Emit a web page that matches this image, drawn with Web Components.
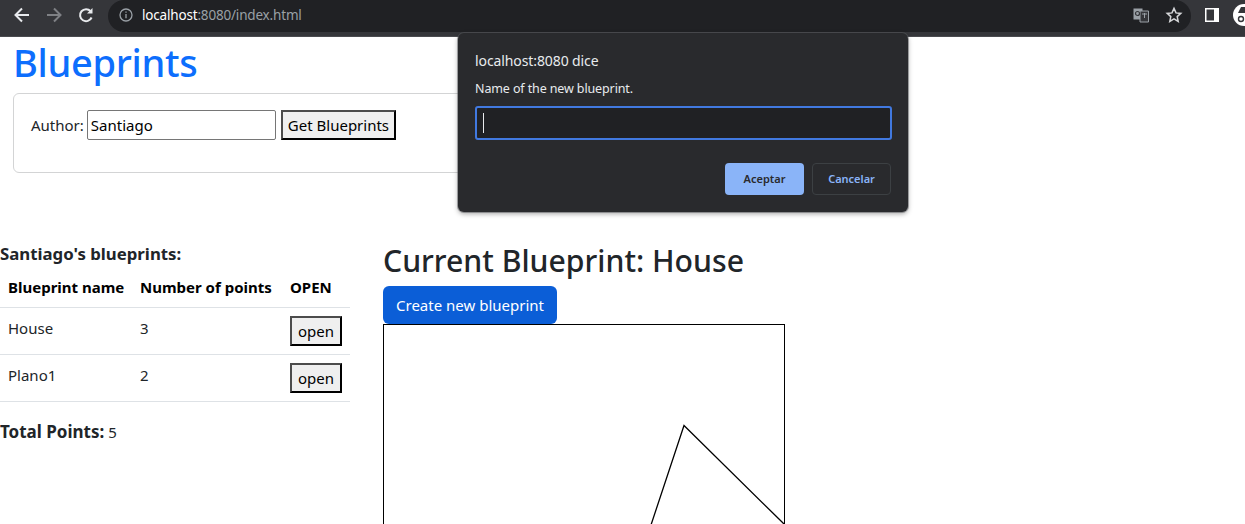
<!DOCTYPE html>
<html>
<head>
<meta charset="utf-8">
<title>Blueprints</title>
<style>
html, body { margin: 0; height: 100%; overflow: hidden; background: #fff; }
body { font-family: "Noto Sans", "Open Sans", sans-serif; position: relative; }
</style>
</head>
<body>
<browser-bar url-host="localhost" url-rest=":8080/index.html"></browser-bar>
<blueprints-app></blueprints-app>
<prompt-dialog title="localhost:8080 dice" message="Name of the new blueprint."></prompt-dialog>

<script>
window.customElements.define(
	'browser-bar',
	class extends HTMLElement {
		constructor() {
			super();
			const root = this.attachShadow({ mode: 'open' });
			root.innerHTML = `
				<style>
					:host { display: flex; align-items: center; height: 36px; background: #35363a; border-bottom: 1px solid #4a4b4f; box-sizing: content-box; font-family: "Noto Sans", sans-serif; }
					.nav { display: flex; align-items: center; gap: 12px; padding-left: 12px; margin-top: -6px; width: 96px; box-sizing: border-box; flex: none; }
					.omnibox { flex: 1; display: flex; align-items: center; height: 32px; margin-top: -4px; background: #202124; border-radius: 16px; padding: 0 8px 2px 10px; box-sizing: border-box; margin-left: 12px; }
					.url { font-size: 13.5px; letter-spacing: -0.18px; color: #9aa0a6; margin-left: 8px; flex: 1; white-space: nowrap; }
					.url b { font-weight: 400; color: #fff; }
					.right { display: flex; align-items: center; margin-top: -6px; width: 54px; flex: none; overflow: hidden; }
					svg { display: block; flex: none; }
				</style>
				<div class="nav">
					<svg width="20" height="20" viewBox="0 0 20 20" fill="none" stroke="#e8eaed" stroke-width="2"><path d="M17 10H4M10 3.500L3.500 10l6.500 6.500"/></svg>
					<svg width="20" height="20" viewBox="0 0 20 20" fill="none" stroke="#7f8185" stroke-width="2"><path d="M3 10h13M10 3.500l6.500 6.500-6.500 6.500"/></svg>
					<svg width="20" height="20" viewBox="0 0 20 20" fill="none" stroke="#e8eaed" stroke-width="2"><path d="M15.600 12.500A6 6 0 1 1 14.600 6.200"/><path d="M16.500 3v5.500H11z" fill="#e8eaed" stroke="none"/></svg>
				</div>
				<div class="omnibox">
					<svg width="16" height="16" viewBox="0 0 16 16" fill="none" stroke="#9aa0a6" stroke-width="1.3"><circle cx="8" cy="8" r="6"/><path d="M8 7v4.200M8 4.400v1.400"/></svg>
					<span class="url"><b>${this.getAttribute('url-host')}</b>${this.getAttribute('url-rest')}</span>
					<svg width="18" height="18" viewBox="0 0 18 18"><path d="M1.500 2.500h9v11h-9z" fill="#9aa0a6"/><path d="M8 5h8.500v11H8z" fill="#35363a" stroke="#9aa0a6"/><circle cx="5.500" cy="7.500" r="2" fill="none" stroke="#35363a" stroke-width="1.200"/><path d="M10 8h5M12.500 7v5" stroke="#9aa0a6" fill="none"/></svg>
					<svg style="margin-left:15px" width="18" height="18" viewBox="0 0 18 18" fill="none" stroke="#d5d6d8" stroke-width="1.500"><path d="M9 2.400l2 4.500 4.800.5-3.600 3.200 1 4.800L9 12.900l-4.200 2.500 1-4.800L2.200 7.400 7 6.900z"/></svg>
				</div>
				<div class="right">
					<svg style="margin-left:14px" width="14" height="14" viewBox="0 0 14 14"><path d="M0 0h14v14H0z" fill="#fff"/><path d="M1.500 1.500h7.500v11H1.500z" fill="#35363a"/></svg>
					<svg style="margin-left:14px" width="22" height="22" viewBox="0 0 22 22"><circle cx="11" cy="11" r="11" fill="#fff"/><path d="M5 9l3-6h6l3 6z" fill="#35363a"/><circle cx="8" cy="15" r="2.500" fill="none" stroke="#35363a" stroke-width="1.400"/></svg>
				</div>
			`;
		}
	}
);

window.customElements.define(
	'plain-button',
	class extends HTMLElement {
		constructor() {
			super();
			const root = this.attachShadow({ mode: 'open' });
			root.innerHTML = `
				<style>
					:host { display: inline-flex; }
					button { font: inherit; color: #000; background: #efefef; border: 2px solid; border-color: #4c4c4c #000 #000 #4c4c4c; border-radius: 0; padding: 0 var(--pad, 6px); height: 30px; margin: 0; white-space: nowrap; }
				</style>
				<button><slot></slot></button>
			`;
		}
	}
);

window.customElements.define(
	'author-form',
	class extends HTMLElement {
		constructor() {
			super();
			const root = this.attachShadow({ mode: 'open' });
			root.innerHTML = `
				<style>
					:host { display: block; width: 500px; height: 80px; box-sizing: border-box; margin-left: 13px; border: 1px solid #d3d4d5; border-radius: 6px; padding: 16px 17px; font-size: 15px; color: #212529; --pad: 5px; }
					.row { display: flex; align-items: center; gap: 3px; height: 30px; }
					.input { box-sizing: border-box; width: 189px; height: 30px; display: flex; align-items: center; border: 1px solid #767676; border-radius: 2px; padding: 0 3px; color: #000; margin-right: 2px; }
				</style>
				<div class="row">
					<span>Author:</span>
					<div class="input">Santiago</div>
					<plain-button>Get Blueprints</plain-button>
				</div>
			`;
		}
	}
);

window.customElements.define(
	'blueprints-table',
	class extends HTMLElement {
		constructor() {
			super();
			const root = this.attachShadow({ mode: 'open' });
			const rows = JSON.parse(this.getAttribute('rows'));
			root.innerHTML = `
				<style>
					:host { display: block; width: 350px; font-size: 15px; color: #000; }
					.tr { display: grid; grid-template-columns: 132px 150px 1fr; padding-left: 8px; border-bottom: 1px solid #dee2e6; box-sizing: content-box; }
					.head { height: 41px; align-items: center; font-weight: 700; font-size: 15px; }
					.body { height: 46px; }
					.body span { padding-top: 10px; color: #212529; }
					.body plain-button { margin-top: 8px; }
				</style>
				<div class="tr head"><span>Blueprint name</span><span>Number of points</span><span>OPEN</span></div>
				${rows.map(r => `<div class="tr body"><span>${r[0]}</span><span>${r[1]}</span><div><plain-button>open</plain-button></div></div>`).join('')}
			`;
		}
	}
);

window.customElements.define(
	'blueprint-canvas',
	class extends HTMLElement {
		constructor() {
			super();
			const root = this.attachShadow({ mode: 'open' });
			root.innerHTML = `
				<style>
					:host { display: block; width: 402px; height: 200px; box-sizing: border-box; border: 1px solid #000; border-bottom: 0; overflow: hidden; }
					svg { display: block; }
				</style>
				<svg width="400" height="199" viewBox="0 0 400 199" fill="none" stroke="#000" stroke-width="1.3"><path d="M264 209L300 100.500L400 199"/></svg>
			`;
		}
	}
);

window.customElements.define(
	'blueprints-app',
	class extends HTMLElement {
		constructor() {
			super();
			const root = this.attachShadow({ mode: 'open' });
			root.innerHTML = `
				<style>
					:host { display: block; color: #212529; }
					h1 { margin: 0 0 0 13px; height: 56px; font-size: 38px; line-height: 51px; font-weight: 500; color: #0d6efd; letter-spacing: -0.3px; }
					.columns { display: flex; margin-top: 45px; }
					.left { width: 350px; flex: none; margin-right: 33px; padding-top: 24px; }
					.left h3 { margin: 0; font-size: 16.800px; line-height: 24px; font-weight: 700; }
					.total { margin-top: 18px; font-size: 15px; line-height: 24px; }
					.total b { font-size: 17px; }
					.right { flex: 1; padding-top: 23px; }
					h2 { margin: 0 0 5px; font-size: 30.200px; line-height: 40px; font-weight: 500; }
					.primary { display: block; box-sizing: border-box; width: 174px; height: 38px; border: 0; border-radius: 6px; background: #0b5ed7; color: #fff; font: inherit; font-size: 15px; padding: 0; }
				</style>
				<h1>Blueprints</h1>
				<author-form></author-form>
				<div class="columns">
					<div class="left">
						<h3>Santiago's blueprints:</h3>
						<blueprints-table rows='[["House",3],["Plano1",2]]'></blueprints-table>
						<div class="total"><b>Total Points:</b> 5</div>
					</div>
					<div class="right">
						<h2>Current Blueprint: House</h2>
						<button class="primary">Create new blueprint</button>
						<blueprint-canvas></blueprint-canvas>
					</div>
				</div>
			`;
		}
	}
);

window.customElements.define(
	'prompt-dialog',
	class extends HTMLElement {
		constructor() {
			super();
			const root = this.attachShadow({ mode: 'open' });
			root.innerHTML = `
				<style>
					:host { position: absolute; left: 458px; top: 33px; width: 450px; height: 179px; box-sizing: border-box; padding: 16px 17px; background: #292a2d; border-radius: 6px; box-shadow: 0 0 0 1px rgba(90,92,96,.5), 0 2px 5px rgba(0,0,0,.35); color: #e8eaed; font-family: "Noto Sans", sans-serif; display: flex; flex-direction: column; }
					.title { font-size: 14px; line-height: 24px; letter-spacing: -0.1px; }
					.msg { font-size: 12.500px; line-height: 18px; margin-top: 7px; letter-spacing: -0.12px; }
					.field { box-sizing: border-box; height: 34px; margin-top: 8px; width: 417px; background: #202124; border: 2px solid #4179e0; border-radius: 3px; padding: 5px 6px; }
					.caret { width: 1px; height: 20px; background: #e8eaed; }
					.buttons { display: flex; justify-content: flex-end; gap: 8px; margin-top: 23px; }
					button { box-sizing: border-box; width: 79px; height: 32px; border-radius: 4px; font: inherit; font-size: 11px; font-weight: 600; padding: 0 0 2px; }
					.ok { background: #8ab4f8; color: #292a2d; border: 0; }
					.cancel { background: transparent; color: #8ab4f8; border: 1px solid #3c4043; }
				</style>
				<div class="title">${this.getAttribute('title')}</div>
				<div class="msg">${this.getAttribute('message')}</div>
				<div class="field"><div class="caret"></div></div>
				<div class="buttons">
					<button class="ok">Aceptar</button>
					<button class="cancel">Cancelar</button>
				</div>
			`;
		}
	}
);
</script>
</body>
</html>
